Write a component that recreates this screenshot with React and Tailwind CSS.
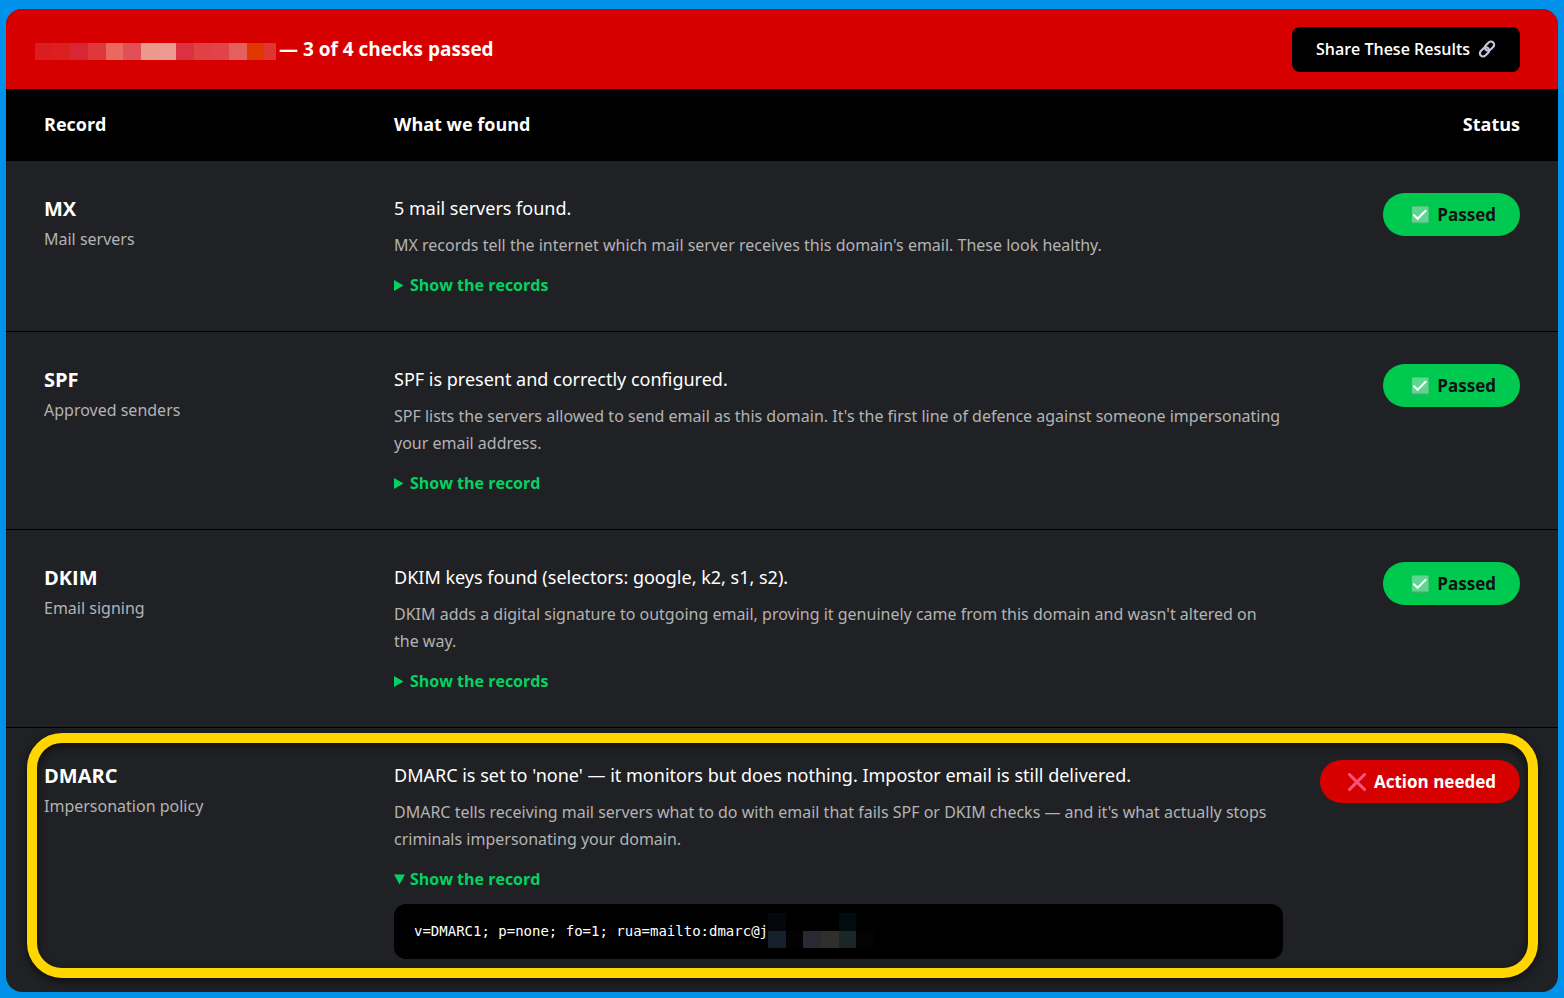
const checks = [
  {
    name: "MX",
    subtitle: "Mail servers",
    finding: "5 mail servers found.",
    detail: "MX records tell the internet which mail server receives this domain's email. These look healthy.",
    toggle: "Show the records",
    passed: true,
  },
  {
    name: "SPF",
    subtitle: "Approved senders",
    finding: "SPF is present and correctly configured.",
    detail:
      "SPF lists the servers allowed to send email as this domain. It's the first line of defence against someone impersonating your email address.",
    toggle: "Show the record",
    passed: true,
  },
  {
    name: "DKIM",
    subtitle: "Email signing",
    finding: "DKIM keys found (selectors: google, k2, s1, s2).",
    detail:
      "DKIM adds a digital signature to outgoing email, proving it genuinely came from this domain and wasn't altered on the\u00a0way.",
    toggle: "Show the records",
    passed: true,
  },
  {
    name: "DMARC",
    subtitle: "Impersonation policy",
    finding: "DMARC is set to 'none' — it monitors but does nothing. Impostor email is still delivered.",
    detail:
      "DMARC tells receiving mail servers what to do with email that fails SPF or DKIM checks — and it's what actually stops criminals impersonating your domain.",
    toggle: "Show the record",
    record: "v=DMARC1; p=none; fo=1; rua=mailto:dmarc@j",
    passed: false,
    highlighted: true,
  },
];

const domainBlocks = [
  "bg-[#db1c20]",
  "bg-[#dc2020]",
  "bg-[#da2535]",
  "bg-[#de383d]",
  "bg-[#e9695f]",
  "bg-[#e24f57]",
  "bg-[#ed988d]",
  "bg-[#ec9991]",
  "bg-[#dc3143]",
  "bg-[#df4144]",
  "bg-[#e0444a]",
  "bg-[#e55f60]",
  "bg-[#e03800]",
];

const recordBlocks = [
  "bg-[#06060f]",
  "bg-black",
  "bg-black",
  "bg-black",
  "bg-[#000c12]",
  "bg-black",
  "bg-[#14212c]",
  "bg-[#020202]",
  "bg-[#2b2833]",
  "bg-[#2f2f2c]",
  "bg-[#1b2727]",
  "bg-[#030302]",
];

function LinkIcon() {
  return (
    <svg viewBox="0 0 18 18" className="w-[18px] h-[18px]" fill="none" stroke="#cdc1d8" strokeWidth="2.2" aria-hidden="true">
      <rect x="6.3" y="2.9" width="10.4" height="6.4" rx="3.2" transform="rotate(-45 11.5 6.1)" />
      <rect x="1.3" y="8.7" width="10.4" height="6.4" rx="3.2" transform="rotate(-45 6.5 11.9)" />
    </svg>
  );
}

function CheckIcon() {
  return (
    <svg viewBox="0 0 18 18" className="w-[18px] h-[18px]" fill="none" aria-hidden="true">
      <rect width="18" height="18" rx="1.5" fill="#3bae6c" />
      <rect x="1" y="0.5" width="16.5" height="16" rx="1" fill="#5dd78f" />
      <path d="M3 9.2 6.6 12.8 14.6 4.8" stroke="#fff" strokeWidth="2" strokeLinecap="round" />
    </svg>
  );
}

function CrossIcon() {
  return (
    <svg viewBox="0 0 18 18" className="w-[18px] h-[18px]" fill="none" aria-hidden="true">
      <path d="M1.5 1.5 16.5 16.5M16.5 1.5 1.5 16.5" stroke="#f8537f" strokeWidth="3.1" strokeLinecap="round" />
    </svg>
  );
}

function StatusPill({ passed }) {
  return (
    <span
      className={`inline-flex items-center gap-2 h-[43px] pl-7 pr-6 rounded-full text-[17px] font-bold whitespace-nowrap ${
        passed ? "bg-[#00c950] text-[#111214]" : "bg-[#d60000] text-white"
      }`}
    >
      {passed ? <CheckIcon /> : <CrossIcon />}
      {passed ? "Passed" : "Action needed"}
    </span>
  );
}

function RecordToggle({ label, record }) {
  return (
    <details open={Boolean(record)} className="group mt-[13px]">
      <summary className="flex items-center list-none cursor-pointer text-base leading-[27px] font-bold text-[#05d163]">
        <svg viewBox="0 0 16 12" className="w-4 h-3 fill-current" aria-hidden="true">
          <path d="M0 0 9.5 5.5 0 11Z" className="group-open:hidden" />
          <path d="M0 0.5H11L5.5 10.5Z" className="hidden group-open:block" />
        </svg>
        {label}
      </summary>
      {record && (
        <div className="mt-[11px] h-[55px] px-5 pb-0.5 flex items-center rounded-xl bg-black text-white">
          <code className="font-['DejaVu_Sans_Mono',monospace] text-sm whitespace-pre">{record}</code>
          <span className="w-[106px] h-[35px] grid grid-cols-6 grid-rows-2" aria-hidden="true">
            {recordBlocks.map((color, i) => (
              <span key={i} className={color} />
            ))}
          </span>
        </div>
      )}
    </details>
  );
}

function CheckRow({ check }) {
  return (
    <tr className="relative align-top">
      <th scope="row" className="pl-[38px] py-8 border-b border-black text-left">
        <span className="block text-xl leading-8 font-bold">{check.name}</span>
        <span className="block font-['Noto_Sans',sans-serif] text-base leading-7 font-normal text-[#b3b3b3]">{check.subtitle}</span>
      </th>
      <td className="py-8 border-b border-black">
        <p className="font-['Noto_Sans',sans-serif] text-lg leading-[31px]">{check.finding}</p>
        <p className="mt-2 font-['Noto_Sans',sans-serif] text-base leading-[27px] text-[#b3b3b3]">{check.detail}</p>
        <RecordToggle label={check.toggle} record={check.record} />
      </td>
      <td className="pr-[38px] py-8 border-b border-black text-right">
        <StatusPill passed={check.passed} />
        {check.highlighted && (
          <span className="absolute left-[21px] right-5 top-[5px] bottom-3.5 rounded-[35px] border-10 border-[#ffd600] drop-shadow-[0_3px_4px_rgba(0,0,0,0.6)] pointer-events-none" />
        )}
      </td>
    </tr>
  );
}

export default function App() {
  return (
    <main className="min-h-screen bg-[#0091eb] px-1.5 pt-[9px] pb-1.5 font-['Open_Sans','Noto_Sans',sans-serif] text-white">
      <section className="rounded-2xl overflow-hidden bg-[#202124]">
        <header className="h-20 pl-[29px] pr-[38px] flex items-center justify-between bg-[#d60000]">
          <h1 className="flex items-center gap-[3px] text-[19px] font-bold">
            <span className="mt-1 flex w-[241px] h-[17px]" aria-hidden="true">
              {domainBlocks.map((color) => (
                <span key={color} className={`flex-3 ${color}`} />
              ))}
              <span className="flex-2 bg-[#e03530]" />
            </span>
            — 3 of 4 checks passed
          </h1>
          <button type="button" className="h-[45px] px-6 flex items-center gap-2 rounded-lg bg-black text-base font-semibold">
            Share These Results
            <LinkIcon />
          </button>
        </header>
        <table className="w-full table-fixed border-separate border-spacing-0">
          <thead>
            <tr className="h-[72px] bg-black text-lg">
              <th scope="col" className="w-1/4 pl-[38px] pb-0.5 text-left font-bold">Record</th>
              <th scope="col" className="pb-0.5 text-left font-bold">What we found</th>
              <th scope="col" className="w-[275px] pr-[38px] pb-0.5 text-right font-bold">Status</th>
            </tr>
          </thead>
          <tbody className="[&>tr:last-child>*]:border-transparent">
            {checks.map((check) => (
              <CheckRow key={check.name} check={check} />
            ))}
          </tbody>
        </table>
      </section>
    </main>
  );
}
